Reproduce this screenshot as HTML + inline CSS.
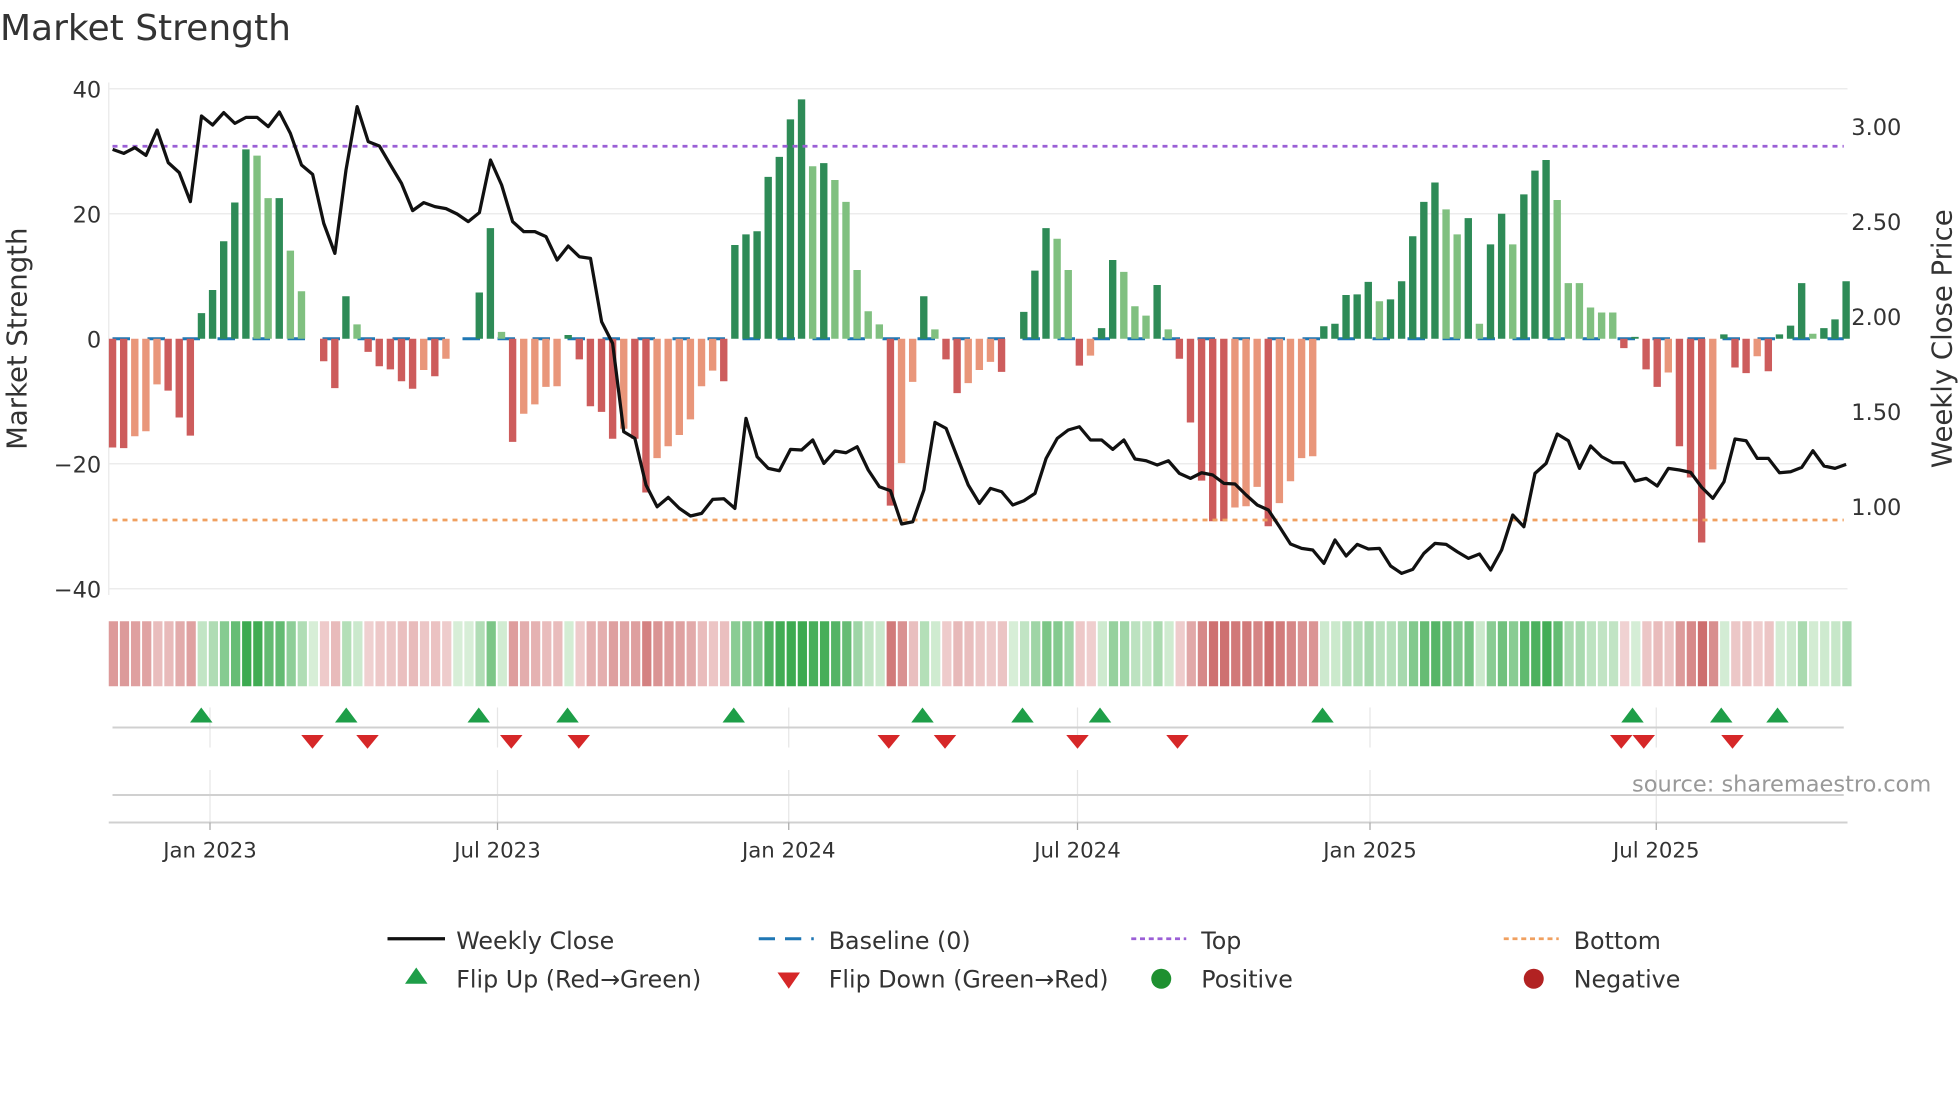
<!DOCTYPE html>
<html><head><meta charset="utf-8"><style>
html,body{margin:0;padding:0;background:#fff;}
svg{display:block;font-family:"DejaVu Sans","Liberation Sans",sans-serif;}
</style></head><body>
<svg id="s" width="1960" height="1102" viewBox="0 0 1568 881.6" preserveAspectRatio="none" xmlns="http://www.w3.org/2000/svg">
<rect width="1568" height="882" fill="#fff"/>
<text x="0" y="32" font-size="28.8" fill="#333">Market Strength</text>
<g stroke="#ececec" stroke-width="1.2">
<line x1="87" x2="1478" y1="71" y2="71"/><line x1="87" x2="1478" y1="171" y2="171"/>
<line x1="87" x2="1478" y1="371" y2="371"/><line x1="87" x2="1478" y1="471" y2="471"/>
<line x1="87" x2="87" y1="66" y2="476"/>
</g>
<g font-size="18" fill="#333" text-anchor="end">
<text x="81" y="78">40</text><text x="81" y="178">20</text><text x="81" y="278">0</text>
<text x="81" y="378">−20</text><text x="81" y="478">−40</text>
</g>
<g font-size="18" fill="#333">
<text x="1481" y="108">3.00</text><text x="1481" y="184">2.50</text><text x="1481" y="260">2.00</text>
<text x="1481" y="336">1.50</text><text x="1481" y="412">1.00</text>
</g>
<text transform="translate(21,271) rotate(-90)" font-size="22" fill="#333" text-anchor="middle">Market Strength</text>
<text transform="translate(1561,271) rotate(-90)" font-size="22" fill="#333" text-anchor="middle">Weekly Close Price</text>
<line x1="90" x2="1475" y1="271" y2="271" stroke="#1f77b4" stroke-width="2.4" stroke-dasharray="14 14"/>
<g id="bars"></g>
<line x1="90" x2="1475" y1="117" y2="117" stroke="#9b5fd6" stroke-width="2.2" stroke-dasharray="4 4"/>
<line x1="90" x2="1475" y1="416" y2="416" stroke="#f0a060" stroke-width="2.2" stroke-dasharray="4 4"/>
<polyline id="price" fill="none" stroke="#111" stroke-width="2.6" stroke-linejoin="round"/>
<g id="heat"></g>
<g stroke="#e6e6e6" stroke-width="1">
<line x1="168" x2="168" y1="566" y2="598"/><line x1="398" x2="398" y1="566" y2="598"/><line x1="631" x2="631" y1="566" y2="598"/>
<line x1="862" x2="862" y1="566" y2="598"/><line x1="1096" x2="1096" y1="566" y2="598"/><line x1="1325" x2="1325" y1="566" y2="598"/>
<line x1="168" x2="168" y1="616" y2="658"/><line x1="398" x2="398" y1="616" y2="658"/><line x1="631" x2="631" y1="616" y2="658"/>
<line x1="862" x2="862" y1="616" y2="658"/><line x1="1096" x2="1096" y1="616" y2="658"/><line x1="1325" x2="1325" y1="616" y2="658"/>
</g>
<line x1="90" x2="1475" y1="582" y2="582" stroke="#d0d0d0" stroke-width="1.6"/>
<line x1="90" x2="1475" y1="636" y2="636" stroke="#d0d0d0" stroke-width="1.6"/>
<line x1="87" x2="1478" y1="658" y2="658" stroke="#d0d0d0" stroke-width="1.6"/>
<g stroke="#aaa" stroke-width="1">
<line x1="168" x2="168" y1="658" y2="664"/><line x1="398" x2="398" y1="658" y2="664"/><line x1="631" x2="631" y1="658" y2="664"/>
<line x1="862" x2="862" y1="658" y2="664"/><line x1="1096" x2="1096" y1="658" y2="664"/><line x1="1325" x2="1325" y1="658" y2="664"/>
</g>
<g id="marks"></g>
<text x="1545" y="633" font-size="18" fill="#999" text-anchor="end">source: sharemaestro.com</text>
<g font-size="17" fill="#333" text-anchor="middle">
<text x="168" y="686">Jan 2023</text><text x="398" y="686">Jul 2023</text><text x="631" y="686">Jan 2024</text>
<text x="862" y="686">Jul 2024</text><text x="1096" y="686">Jan 2025</text><text x="1325" y="686">Jul 2025</text>
</g>
<g font-size="19" fill="#333">
<line x1="310" x2="356" y1="751" y2="751" stroke="#111" stroke-width="2.6"/>
<text x="365" y="759">Weekly Close</text>
<line x1="607" x2="651" y1="751" y2="751" stroke="#1f77b4" stroke-width="2.4" stroke-dasharray="13 8"/>
<text x="663" y="759">Baseline (0)</text>
<line x1="905" x2="949" y1="751" y2="751" stroke="#9b5fd6" stroke-width="2.2" stroke-dasharray="4 3"/>
<text x="961" y="759">Top</text>
<line x1="1203" x2="1247" y1="751" y2="751" stroke="#f0a060" stroke-width="2.2" stroke-dasharray="4 3"/>
<text x="1259" y="759">Bottom</text>
<polygon points="333,774 342,787 324,787" fill="#1e9e48"/>
<text x="365" y="790">Flip Up (Red→Green)</text>
<polygon points="622,778 640,778 631,791" fill="#d62728"/>
<text x="663" y="790">Flip Down (Green→Red)</text>
<circle cx="929" cy="783" r="8" fill="#1e9030"/>
<text x="961" y="790">Positive</text>
<circle cx="1227" cy="783" r="8" fill="#b22222"/>
<text x="1259" y="790">Negative</text>
</g>
</svg>
<script>
var V=[-17.4,-17.5,-15.6,-14.8,-7.3,-8.3,-12.6,-15.5,4.1,7.8,15.6,21.8,30.3,29.3,22.5,22.5,14.1,7.6,0,-3.6,-7.9,6.8,2.3,-2.1,-4.4,-4.9,-6.8,-8,-5,-6,-3.2,0,0,7.4,17.7,1.1,-16.5,-12,-10.5,-7.7,-7.6,0.6,-3.3,-10.8,-11.7,-16,-14.4,-16,-24.6,-19.1,-17.2,-15.4,-12.9,-7.6,-5.1,-6.8,15,16.7,17.2,25.9,29.1,35.1,38.3,27.6,28.1,25.4,21.9,11,4.4,2.3,-26.7,-19.9,-6.9,6.8,1.5,-3.3,-8.7,-7.1,-5,-3.7,-5.3,0,4.3,10.9,17.7,16,11,-4.3,-2.7,1.7,12.6,10.7,5.2,3.7,8.6,1.5,-3.2,-13.4,-22.7,-29.2,-29.2,-27,-26.8,-23.7,-30,-26.3,-22.8,-19.1,-18.8,2,2.4,7,7.1,9.1,6,6.3,9.2,16.4,21.9,25,20.7,16.7,19.3,2.4,15.1,20,15.1,23.1,26.9,28.6,22.2,8.9,8.9,5,4.2,4.2,-1.5,0.3,-4.9,-7.7,-5.4,-17.2,-22.2,-32.6,-20.9,0.7,-4.6,-5.5,-2.8,-5.2,0.7,2.1,8.9,0.8,1.7,3.1,9.2];
var P=[208,220,203,226,150,248,278,365,108,135,98,130,112,112,140,96,160,255,283,430,520,270,80,185,198,255,310,392,368,380,386,402,425,398,240,315,425,455,455,470,540,498,530,535,725,790,1055,1075,1215,1280,1252,1285,1308,1300,1258,1256,1285,1015,1130,1165,1172,1108,1110,1080,1150,1113,1118,1100,1170,1220,1232,1332,1325,1230,1027,1045,1130,1215,1270,1225,1235,1275,1262,1240,1135,1075,1050,1040,1080,1080,1108,1080,1137,1142,1155,1142,1180,1195,1178,1185,1210,1212,1245,1275,1290,1340,1392,1405,1410,1450,1380,1428,1393,1407,1405,1458,1480,1468,1420,1390,1393,1415,1435,1422,1470,1410,1305,1340,1180,1150,1062,1082,1165,1098,1130,1148,1148,1203,1195,1218,1165,1170,1177,1222,1255,1205,1077,1082,1135,1135,1178,1175,1162,1112,1158,1165,1153,1113];
var D=[1,1,0,0,0,1,1,1,1,1,1,1,1,0,0,1,0,0,1,1,1,1,0,1,1,1,1,1,0,1,0,1,1,1,1,0,1,0,0,0,0,1,1,1,1,1,0,1,1,0,0,0,0,0,0,1,1,1,1,1,1,1,1,0,1,0,0,0,0,0,1,0,0,1,0,1,1,0,0,0,1,1,1,1,1,0,0,1,0,1,1,0,0,0,1,0,1,1,1,1,1,0,0,0,1,0,0,0,0,1,1,1,1,1,0,1,1,1,1,1,0,0,1,0,1,1,0,1,1,1,0,0,0,0,0,0,1,1,1,1,0,1,1,1,0,1,1,1,0,1,1,1,1,0,1,1,1];
var NS="http://www.w3.org/2000/svg";
function el(t,a,p){var e=document.createElementNS(NS,t);for(var k in a)e.setAttribute(k,a[k]);p.appendChild(e);return e;}
var bars=document.getElementById('bars'),heat=document.getElementById('heat'),marks=document.getElementById('marks');
var pts=[];
for(var i=0;i<V.length;i++){
 var x=90.1+8.89*i,v=V[i],h=Math.abs(v)*5,dk=D[i];
 var c=v>=0?(dk?'#2e8b57':'#80c080'):(dk?'#cd5c5c':'#e9967a');
 if(h>0.3)el('rect',{x:x-3,y:v>=0?271-h:271,width:5.9,height:h,fill:c},bars);
 pts.push((x).toFixed(1)+','+(64+P[i]*0.2667).toFixed(1));
 var t=Math.min(1,Math.abs(v)/30),col;
 if(v>=0){var r=Math.round(215-(215-60)*t),g=Math.round(238-(238-170)*t),b=Math.round(215-(215-80)*t);col='rgb('+r+','+g+','+b+')';}
 else{var r=Math.round(242-(242-205)*t),g=Math.round(215-(215-110)*t),b=Math.round(215-(215-110)*t);col='rgb('+r+','+g+','+b+')';}
 el('rect',{x:(87+8.89*i).toFixed(2),y:497,width:7.4,height:52,fill:col},heat);
}
document.getElementById('price').setAttribute('points',pts.join(' '));
[161,277,383,454,587,738,818,880,1058,1306,1377,1422].forEach(function(x){el('polygon',{points:x+',566 '+(x+9)+',578 '+(x-9)+',578',fill:'#1e9e48'},marks);});
[250,294,409,463,711,756,862,942,1297,1315,1386].forEach(function(x){el('polygon',{points:(x-9)+',588 '+(x+9)+',588 '+x+',599',fill:'#d62728'},marks);});
</script>
</body></html>
